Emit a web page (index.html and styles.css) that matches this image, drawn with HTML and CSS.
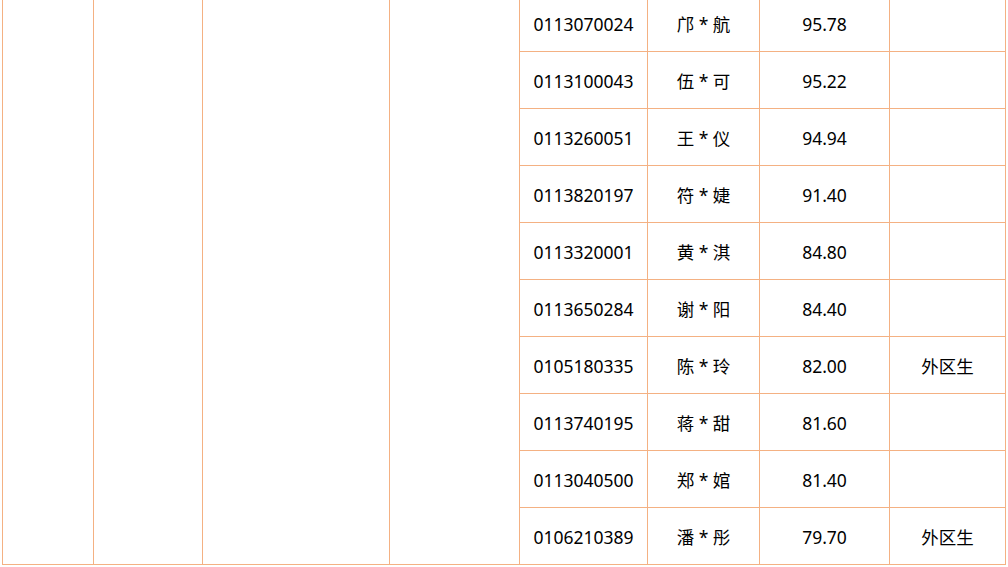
FILE: index.html
```html
<!DOCTYPE html>
<html lang="zh-CN">
<head>
<meta charset="utf-8">
<title>成绩表</title>
<link rel="stylesheet" href="styles.css">
</head>
<body>
<div class="viewport">
<table class="score-table">
<colgroup>
<col class="c1"><col class="c2"><col class="c3"><col class="c4">
<col class="c5"><col class="c6"><col class="c7"><col class="c8">
</colgroup>
<tbody>
<tr><td rowspan="10"></td><td rowspan="10"></td><td rowspan="10"></td><td rowspan="10"></td><td>0113070024</td><td>邝 * 航</td><td>95.78</td><td></td></tr>
<tr><td>0113100043</td><td>伍 * 可</td><td>95.22</td><td></td></tr>
<tr><td>0113260051</td><td>王 * 仪</td><td>94.94</td><td></td></tr>
<tr><td>0113820197</td><td>符 * 婕</td><td>91.40</td><td></td></tr>
<tr><td>0113320001</td><td>黄 * 淇</td><td>84.80</td><td></td></tr>
<tr><td>0113650284</td><td>谢 * 阳</td><td>84.40</td><td></td></tr>
<tr><td>0105180335</td><td>陈 * 玲</td><td>82.00</td><td>外区生</td></tr>
<tr><td>0113740195</td><td>蒋 * 甜</td><td>81.60</td><td></td></tr>
<tr><td>0113040500</td><td>郑 * 婠</td><td>81.40</td><td></td></tr>
<tr><td>0106210389</td><td>潘 * 彤</td><td>79.70</td><td>外区生</td></tr>
</tbody>
</table>
</div>
</body>
</html>
```
FILE: styles.css
```css
html, body {
  margin: 0;
  padding: 0;
  background: #ffffff;
}
.viewport {
  width: 1008px;
  height: 567px;
  overflow: hidden;
  padding-left: 2px;
  box-sizing: border-box;
}
.score-table {
  margin-top: -6px;
  border-collapse: collapse;
  table-layout: fixed;
  width: 1004px;
  font-family: "Noto Sans", "Noto Sans CJK SC", sans-serif;
  font-size: 17.5px;
  color: #000;
}
.c1 { width: 91px; }
.c2 { width: 109px; }
.c3 { width: 187px; }
.c4 { width: 130px; }
.c5 { width: 128px; }
.c6 { width: 112px; }
.c7 { width: 130px; }
.c8 { width: 116px; }
.score-table td {
  border: 1px solid #f4b183;
  height: 54px;
  padding: 2px 0 0;
  text-align: center;
  vertical-align: middle;
  white-space: nowrap;
  line-height: 20px;
}
```
